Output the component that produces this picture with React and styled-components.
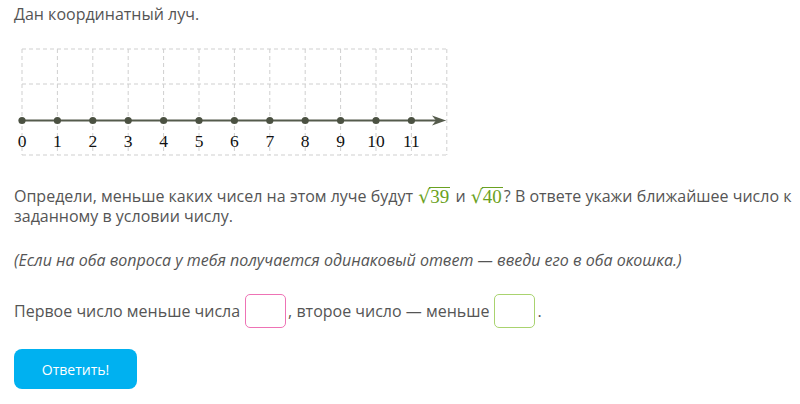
import React from "react";
import styled, { createGlobalStyle } from "styled-components";

const Global = createGlobalStyle`
  html, body { margin: 0; padding: 0; background: #fff; }
  body { font-family: "Open Sans", "Liberation Sans", sans-serif; color: #555; }
`;

const Page = styled.div`
  padding: 4px 8px 0 14px;
  width: 778px;
`;

const Para = styled.p`
  margin: 0;
  font-size: 16px;
  line-height: 20px;
  font-style: ${(p) => (p.$italic ? "italic" : "normal")};
  margin-top: ${(p) => p.$mt || 0}px;
`;

const Figure = styled.svg`
  display: block;
  margin-top: 16px;
`;

const Sqrt = styled.span`
  display: inline-flex;
  align-items: flex-end;
  color: #6aa121;
  font-family: "Liberation Serif", "DejaVu Serif", serif;
  font-size: 19px;
  line-height: 20px;
  vertical-align: -1px;
  margin: 0 1px;
`;

const Radical = styled.span`
  font-size: 19px;
  margin-right: -1px;
  font-family: "DejaVu Sans", sans-serif;
`;

const Radicand = styled.span`
  border-top: 1.3px solid #6aa121;
  padding: 0 1px;
  line-height: 18px;
`;

const AnswerRow = styled.div`
  display: flex;
  align-items: center;
  margin-top: 24px;
  font-size: 16px;
  line-height: 20px;
`;

const Box = styled.input`
  width: 41px;
  height: 34px;
  box-sizing: border-box;
  border: 1.5px solid ${(p) => p.$color};
  border-radius: 5px;
  margin: 0 2px 0 5px;
  background: #fff;
  outline: none;
  font-family: inherit;
`;

const Button = styled.button`
  display: block;
  margin-top: 21px;
  width: 123px;
  height: 40px;
  border: none;
  border-radius: 8px;
  background: #00b1f0;
  color: #fff;
  font-family: "Open Sans", "Liberation Sans", sans-serif;
  font-size: 14px;
  cursor: pointer;
`;

function NumberLine() {
  const ox = 8;
  const step = 35.4;
  const top = 9;
  const right = 433;
  const bottom = 115;
  const axisY = 80.5;
  const vlines = Array.from({ length: 13 }, (_, i) => ox + i * step);
  const hlines = [top, 44, axisY, bottom];
  return (
    <Figure width="440" height="120" viewBox="0 0 440 120">
      {vlines.map((x, i) => (
        <line key={"v" + i} x1={x} y1={top} x2={x} y2={bottom} stroke="#cfcfcf" strokeWidth="1" strokeDasharray="4 3" />
      ))}
      {hlines.map((y, i) => (
        <line key={"h" + i} x1={ox} y1={y} x2={right} y2={y} stroke="#cfcfcf" strokeWidth="1" strokeDasharray="4 3" />
      ))}
      <line x1={ox} y1={axisY} x2={424} y2={axisY} stroke="#555b4c" strokeWidth="2" />
      <path d={`M432 ${axisY} L418 ${axisY - 5} L422 ${axisY} L418 ${axisY + 5} Z`} fill="#555b4c" />
      {Array.from({ length: 12 }, (_, i) => (
        <circle key={"c" + i} cx={ox + i * step} cy={axisY} r="3.6" fill="#4b5142" />
      ))}
      {Array.from({ length: 12 }, (_, i) => (
        <text
          key={"t" + i}
          x={ox + i * step}
          y={107}
          textAnchor="middle"
          fontFamily='"Liberation Serif", "Times New Roman", serif'
          fontSize="17.5"
          fill="#111"
        >
          {i}
        </text>
      ))}
    </Figure>
  );
}

function Root({ n }) {
  return (
    <Sqrt>
      <Radical>√</Radical>
      <Radicand>{n}</Radicand>
    </Sqrt>
  );
}

export default function App() {
  return (
    <>
      <Global />
      <Page>
        <Para>Дан координатный луч.</Para>
        <NumberLine />
        <Para $mt={26}>
          Определи, меньше каких чисел на этом луче будут <Root n="39" /> и <Root n="40" />? В ответе укажи
          ближайшее число к заданному в условии числу.
        </Para>
        <Para $italic $mt={24}>
          (Если на оба вопроса у тебя получается одинаковый ответ — введи его в оба окошка.)
        </Para>
        <AnswerRow>
          Первое число меньше числа
          <Box $color="#ee73b5" />
          , второе число — меньше
          <Box $color="#a9d36f" />.
        </AnswerRow>
        <Button>Ответить!</Button>
      </Page>
    </>
  );
}
